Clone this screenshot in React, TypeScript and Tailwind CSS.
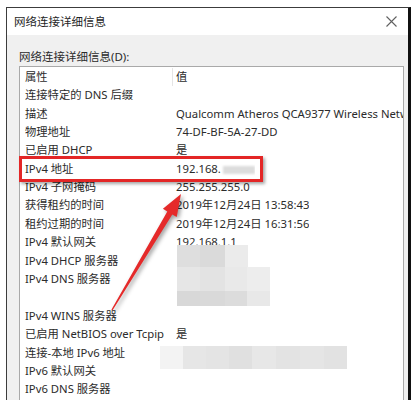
import React from 'react'

const rows: [string, string][] = [
  ['连接特定的 DNS 后缀', ''],
  ['描述', 'Qualcomm Atheros QCA9377 Wireless Network Adapter'],
  ['物理地址', '74-DF-BF-5A-27-DD'],
  ['已启用 DHCP', '是'],
  ['IPv4 地址', '192.168.'],
  ['IPv4 子网掩码', '255.255.255.0'],
  ['获得租约的时间', '2019年12月24日 13:58:43'],
  ['租约过期的时间', '2019年12月24日 16:31:56'],
  ['IPv4 默认网关', '192.168.1.1'],
  ['IPv4 DHCP 服务器', ''],
  ['IPv4 DNS 服务器', ''],
  ['', ''],
  ['IPv4 WINS 服务器', ''],
  ['已启用 NetBIOS over Tcpip', '是'],
  ['连接-本地 IPv6 地址', ''],
  ['IPv6 默认网关', ''],
  ['IPv6 DNS 服务器', ''],
]

// mosaic cells over the hidden values
const mosaic: { x: number; y: number; w: number; h: number; c: string }[] = [
  { x: 177, y: 245, w: 23, h: 22, c: '#dedede' },
  { x: 200, y: 245, w: 25, h: 22, c: '#dadada' },
  { x: 225, y: 245, w: 23, h: 22, c: '#ebebeb' },
  { x: 177, y: 267, w: 23, h: 24, c: '#e6e6e6' },
  { x: 200, y: 267, w: 25, h: 24, c: '#e3e3e3' },
  { x: 225, y: 267, w: 22, h: 24, c: '#e9e9e9' },
  { x: 247, y: 267, w: 23, h: 24, c: '#ededed' },
  { x: 177, y: 291, w: 23, h: 15, c: '#d8d8d8' },
  { x: 200, y: 291, w: 25, h: 15, c: '#d9d9d9' },
  { x: 225, y: 291, w: 22, h: 15, c: '#dcdcdc' },
  { x: 247, y: 291, w: 23, h: 15, c: '#e8e8e8' },
  { x: 160, y: 346, w: 23, h: 23, c: '#f3f3f3' },
  { x: 183, y: 346, w: 23, h: 23, c: '#e6e6e6' },
  { x: 206, y: 346, w: 23, h: 23, c: '#e4e4e4' },
  { x: 229, y: 346, w: 23, h: 23, c: '#e0e0e0' },
  { x: 252, y: 346, w: 24, h: 23, c: '#e7e7e7' },
  { x: 276, y: 346, w: 24, h: 23, c: '#e3e3e3' },
  { x: 300, y: 346, w: 24, h: 23, c: '#e5e5e5' },
  { x: 324, y: 346, w: 23, h: 23, c: '#e2e2e2' },
]

function Row({ name, value }: { name: string; value: string }) {
  return (
    <div className="flex h-[18.4px] items-center whitespace-nowrap">
      <div className="w-[152px] shrink-0 pl-[5px]">{name}</div>
      <div className="overflow-hidden pl-[4px]">
        {value}
        {name === 'IPv4 地址' && (
          <span className="ml-[2px] inline-block h-[8px] w-[32px] bg-[#dcdcdc] align-middle blur-[1px]" />
        )}
      </div>
    </div>
  )
}

export default function App() {
  return (
    <div
      className="relative h-[400px] w-[417px] overflow-hidden bg-white text-[11.3px] text-[#2b2b2b]"
      style={{ fontFamily: "'Noto Sans', 'Noto Sans CJK SC', sans-serif" }}
    >
      <div className="ml-[6px] mt-[7px] w-[405px] border-l border-t border-r-[3px] border-l-[#3c3c3c] border-t-[#3c3c3c] border-r-[#111]">
        {/* Title bar */}
        <div className="flex h-[27px] items-center justify-between bg-white pl-[7px] pr-[10px] text-[#1f1f1f]">
          <span className="text-[11.5px]">网络连接详细信息</span>
          <svg width="11" height="11" viewBox="0 0 11 11" className="mr-[1px]">
            <path d="M0.5 0.5 L10.5 10.5 M10.5 0.5 L0.5 10.5" stroke="#606060" strokeWidth="1.1" />
          </svg>
        </div>

        {/* Body */}
        <div className="h-[370px] bg-[#f0f0f0] pl-[12px] pr-[4px] pt-[13px]">
          <div className="flex h-[18px] items-center text-[11.5px]">网络连接详细信息(D):</div>
          <div className="h-[400px] border border-[#a9a9a9] bg-white pt-[1px]">
            <div className="flex h-[18.4px] items-center">
              <div className="w-[152px] shrink-0 pl-[5px]">属性</div>
              <div className="h-full border-l border-[#e5e5e5] pl-[3px] leading-[18.4px]">值</div>
            </div>
            {rows.map(([n, v], i) => (
              <Row key={i} name={n} value={v} />
            ))}
          </div>
        </div>
      </div>

      {/* mosaic blur over private values */}
      {mosaic.map((m, i) => (
        <div
          key={i}
          className="absolute"
          style={{ left: m.x, top: m.y, width: m.w, height: m.h, background: m.c }}
        />
      ))}

      {/* Red highlight box */}
      <div className="absolute left-[19px] top-[156px] h-[26px] w-[244px] border-[3px] border-[#e32626] shadow-[2px_2px_3px_rgba(0,0,0,0.35)]" />

      {/* Arrow */}
      <svg
        className="pointer-events-none absolute left-0 top-0 drop-shadow-[2px_2px_2px_rgba(0,0,0,0.4)]"
        width="417"
        height="400"
      >
        <polygon
          points="181,194 176.7,217 172.3,214.4 112.6,310.3 111.4,309.7 167.3,211.4 162.9,208.8"
          fill="#e52a2a"
        />
      </svg>
    </div>
  )
}
